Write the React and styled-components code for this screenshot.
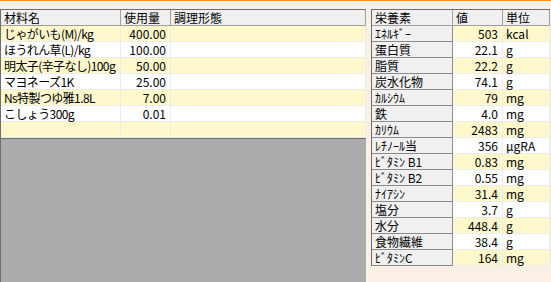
import React from "react";
import styled, { createGlobalStyle } from "styled-components";

const GlobalStyle = createGlobalStyle`
  html, body {
    margin: 0;
    padding: 0;
  }
  body {
    background: #fbf0e6;
    font-family: "Noto Sans CJK JP", "Noto Sans", sans-serif;
    font-size: 12px;
    color: #000;
  }
`;

const ingredients = [
  { name: "じゃがいも(M)/kg", qty: "400.00", form: "" },
  { name: "ほうれん草(L)/kg", qty: "100.00", form: "" },
  { name: "明太子(辛子なし)100g", qty: "50.00", form: "" },
  { name: "マヨネーズ1K", qty: "25.00", form: "" },
  { name: "Ns特製つゆ雅1.8L", qty: "7.00", form: "" },
  { name: "こしょう300g", qty: "0.01", form: "" },
  { name: "", qty: "", form: "" },
];

const nutrients = [
  ["ｴﾈﾙｷﾞｰ", "503", "kcal"],
  ["蛋白質", "22.1", "g"],
  ["脂質", "22.2", "g"],
  ["炭水化物", "74.1", "g"],
  ["ｶﾙｼｳﾑ", "79", "mg"],
  ["鉄", "4.0", "mg"],
  ["ｶﾘｳﾑ", "2483", "mg"],
  ["ﾚﾁﾉｰﾙ当", "356", "μgRA"],
  ["ﾋﾞﾀﾐﾝ B1", "0.83", "mg"],
  ["ﾋﾞﾀﾐﾝ B2", "0.55", "mg"],
  ["ﾅｲｱｼﾝ", "31.4", "mg"],
  ["塩分", "3.7", "g"],
  ["水分", "448.4", "g"],
  ["食物繊維", "38.4", "g"],
  ["ﾋﾞﾀﾐﾝC", "164", "mg"],
];

function App() {
  return (
    <>
      <GlobalStyle />
      <Screen>
        <RecipePanel>
          <RecipeGrid>
            <HeadCell>材料名</HeadCell>
            <HeadCell>使用量</HeadCell>
            <HeadCell>調理形態</HeadCell>
            {ingredients.map((row, i) => (
              <React.Fragment key={i}>
                <Cell $alt={i % 2 === 0} $tight>
                  {row.name}
                </Cell>
                <Cell $alt={i % 2 === 0} $num>
                  {row.qty}
                </Cell>
                <Cell $alt={i % 2 === 0}>{row.form}</Cell>
              </React.Fragment>
            ))}
          </RecipeGrid>
        </RecipePanel>

        <NutrientPanel>
          <NutrientGrid>
            <HeadCell>栄養素</HeadCell>
            <HeadCell>値</HeadCell>
            <HeadCell>単位</HeadCell>
            {nutrients.map(([name, value, unit], i) => (
              <React.Fragment key={name}>
                <NameCell>{name}</NameCell>
                <Cell $alt={i % 2 === 0} $num>
                  {value}
                </Cell>
                <Cell $alt={i % 2 === 0}>{unit}</Cell>
              </React.Fragment>
            ))}
          </NutrientGrid>
        </NutrientPanel>
      </Screen>
    </>
  );
}

const Screen = styled.div`
  width: 551px;
  height: 282px;
  box-sizing: border-box;
  border-top: 1px solid #ff8c1a;
  padding-top: 8px;
  display: flex;
  align-items: flex-start;
  overflow: hidden;
`;

const RecipePanel = styled.div`
  width: 366px;
  height: 273px;
  box-sizing: border-box;
  background: #ababab;
  border-top: 1px solid #6e6e6e;
  border-left: 1px solid #6e6e6e;
`;

const RecipeGrid = styled.div`
  display: grid;
  grid-template-columns: 120px 50px 1fr;
  grid-auto-rows: 16px;
  border-bottom: 1px solid #6e6e6e;
`;

const NutrientPanel = styled.div`
  margin-left: 5px;
  width: 179px;
  box-sizing: border-box;
  border-top: 1px solid #6e6e6e;
  border-left: 1px solid #6e6e6e;
`;

const NutrientGrid = styled.div`
  display: grid;
  grid-template-columns: 81px 50px 47px;
  grid-auto-rows: 16px;
`;

const Cell = styled.div`
  box-sizing: border-box;
  padding: ${(p) => (p.$num ? "0 4px 0 0" : "0 0 0 3px")};
  background: ${(p) => (p.$alt ? "#fff8cd" : "#ffffff")};
  border-right: 1px solid #ececec;
  border-bottom: 1px solid #ececec;
  text-align: ${(p) => (p.$num ? "right" : "left")};
  font-size: 12px;
  line-height: 15px;
  letter-spacing: ${(p) => (p.$tight ? "-0.6px" : "0")};
  white-space: nowrap;
`;

const HeadCell = styled(Cell)`
  background: #f0f0f0;
  border-right: 1px solid #a0a0a0;
  border-bottom: 1px solid #a0a0a0;
  text-align: left;
  padding: 0 0 0 3px;
`;

const NameCell = styled(HeadCell)`
  border-right-color: #8c8c8c;
  border-bottom-color: #8c8c8c;
`;

export default App;
